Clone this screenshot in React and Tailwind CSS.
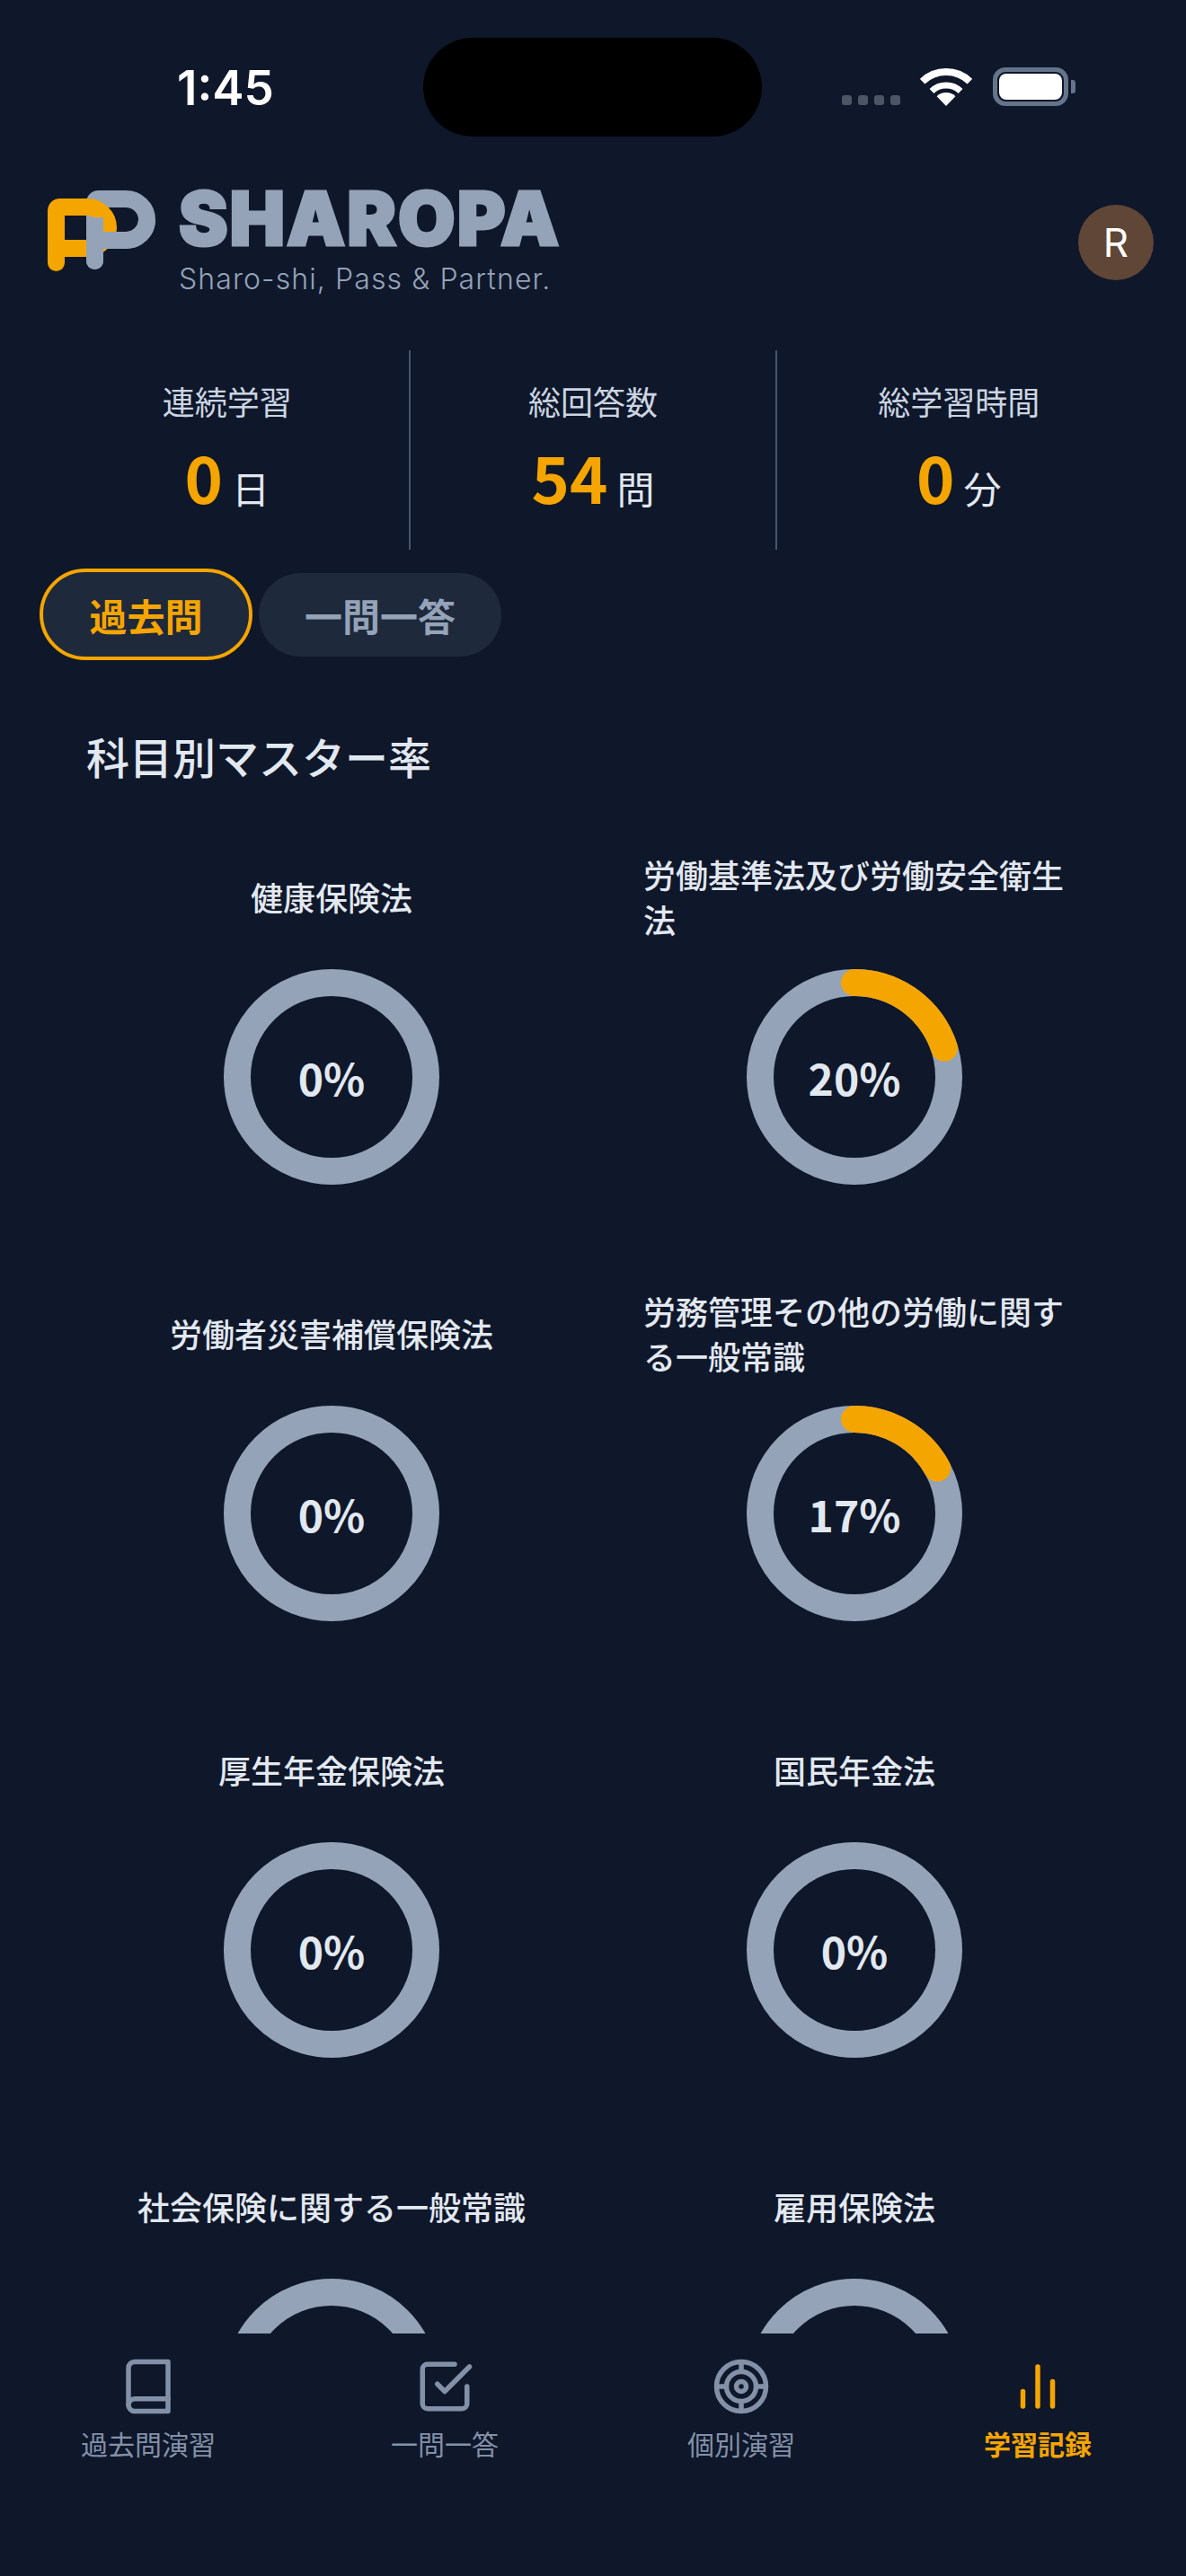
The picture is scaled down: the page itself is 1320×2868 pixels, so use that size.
import React from "react";
import { FiBook, FiCheckSquare, FiBarChart2 } from "react-icons/fi";

const subjects = [
    { name: "健康保険法", rate: 0 },
    { name: "労働基準法及び労働安全衛生法", rate: 20 },
    { name: "労働者災害補償保険法", rate: 0 },
    { name: "労務管理その他の労働に関する一般常識", rate: 17 },
    { name: "厚生年金保険法", rate: 0 },
    { name: "国民年金法", rate: 0 },
    { name: "社会保険に関する一般常識", rate: 0 },
    { name: "雇用保険法", rate: 0 },
];

const stats = [
    { label: "連続学習", value: 0, unit: "日" },
    { label: "総回答数", value: 54, unit: "問" },
    { label: "総学習時間", value: 0, unit: "分" },
];

function TargetIcon() {
    return (
        <svg viewBox="0 0 24 24" className="w-[66px] h-[66px]" fill="none" stroke="currentColor" strokeWidth="2">
            <circle cx="12" cy="12" r="10" />
            <circle cx="12" cy="12" r="6" />
            <circle cx="12" cy="12" r="2" />
            <path d="M12 2v4M12 18v4M2 12h4M18 12h4" />
        </svg>
    );
}

const navItems = [
    { label: "過去問演習", icon: <FiBook size={66} /> },
    { label: "一問一答", icon: <FiCheckSquare size={66} /> },
    { label: "個別演習", icon: <TargetIcon /> },
    { label: "学習記録", icon: <FiBarChart2 size={66} />, active: true },
];

function StatusBar() {
    return (
        <div className="h-[212px] pt-[42px] flex flex-row items-start shrink-0">
            <div className="w-[471px] pl-[197px] pt-[24px] font-['Inter'] font-semibold text-[53px] leading-[64px] text-white">1:45</div>
            <div className="w-[377px] h-[110px] rounded-[55px] bg-black" />
            <div className="pl-[89px] pt-[33px] flex flex-row items-end">
                <div className="flex flex-row gap-[7px] mb-[1px]">
                    <div className="w-[11px] h-[11px] rounded-[3px] bg-[#4b5563]" />
                    <div className="w-[11px] h-[11px] rounded-[3px] bg-[#4b5563]" />
                    <div className="w-[11px] h-[11px] rounded-[3px] bg-[#4b5563]" />
                    <div className="w-[11px] h-[11px] rounded-[3px] bg-[#4b5563]" />
                </div>
                <svg viewBox="0 0 58 42" className="w-[58px] h-[42px] ml-[22px]" fill="none" stroke="#fff">
                    <path d="M2.6 14.7A38 38 0 0 1 55.4 14.7" strokeWidth="8" />
                    <path d="M13 25.5A23 23 0 0 1 45 25.5" strokeWidth="7" />
                    <path d="M29 42L18.6 31.2A15 15 0 0 1 39.4 31.2Z" fill="#fff" stroke="none" />
                </svg>
                <div className="ml-[23px] flex flex-row items-center">
                    <div className="w-[84px] h-[43px] rounded-[14px] border-[5px] border-[#64748b] p-[2px]">
                        <div className="w-full h-full rounded-[8px] bg-white" />
                    </div>
                    <div className="ml-[3px] w-[5px] h-[15px] rounded-r-[3px] bg-[#64748b]" />
                </div>
            </div>
        </div>
    );
}

function LogoMark() {
    return (
        <svg viewBox="0 0 120 90" className="w-[120px] h-[90px] shrink-0" fill="none" strokeWidth="19" strokeLinecap="round">
            <path d="M52.5 78.5V14Q52.5 9.5 57 9.5H87A23.5 23 0 0 1 110.5 32.5A23.5 23 0 0 1 87 55.5H52.5" stroke="#94a3b8" />
            <path d="M9.5 80.5V23Q9.5 18.5 14 18.5H44A23.5 23 0 0 1 67.5 41.5A23.5 23 0 0 1 44 64.5H9.5" stroke="#f5a500" />
            <path d="M52.5 78.5V30" stroke="#94a3b8" strokeLinecap="butt" />
            <path d="M52.5 78.5V72" stroke="#94a3b8" />
            <path d="M110.5 32.5A23.5 23 0 0 1 87 55.5H52.5" stroke="#94a3b8" strokeLinecap="butt" />
        </svg>
    );
}

function Header() {
    return (
        <div className="h-[178px] pl-[53px] pr-[36px] flex flex-row justify-between items-start shrink-0">
            <div className="flex flex-row gap-[26px]">
                <LogoMark />
                <div className="flex flex-col -mt-[10px]">
                    <span className="font-['Inter'] font-black text-[82px] leading-[84px] tracking-[2px] [-webkit-text-stroke:3px_#94a3b8] text-[#94a3b8]">SHAROPA</span>
                    <span className="mt-[5px] font-['Inter'] font-light text-[32px] leading-[40px] tracking-[1.1px] text-[#94a3b8]">Sharo-shi, Pass &amp; Partner.</span>
                </div>
            </div>
            <div className="mt-[16px] w-[84px] h-[84px] rounded-full bg-[#5f4636] flex items-center justify-center font-['Inter'] text-[44px] text-white">R</div>
        </div>
    );
}

function Stats() {
    return (
        <div className="h-[222px] px-[50px] flex flex-row shrink-0">
            {stats.map((s, i) => (
                <div
                    key={s.label}
                    className={
                        i < 2
                            ? "flex-1 flex flex-col items-center justify-center gap-[12px] border-r-2 border-[#475569] pb-[8px]"
                            : "flex-1 flex flex-col items-center justify-center gap-[12px] pb-[8px]"
                    }
                >
                    <p className="text-[36px] leading-[54px] text-[#cbd5e1]">{s.label}</p>
                    <p className="flex flex-row items-baseline gap-[10px]">
                        <span className="text-[72px] leading-[90px] font-bold text-[#f5a500]">{s.value}</span>
                        <span className="text-[42px] leading-[60px] text-[#e2e8f0]">{s.unit}</span>
                    </p>
                </div>
            ))}
        </div>
    );
}

function Tabs() {
    return (
        <div className="mt-[21px] pl-[44px] flex flex-row items-center gap-[7px] shrink-0">
            <div className="w-[237px] h-[102px] rounded-[51px] border-[4px] border-[#f5a500] bg-[#1e293b] flex items-center justify-center text-[42px] font-bold text-[#f5a500]">過去問</div>
            <div className="w-[270px] h-[93px] rounded-[47px] bg-[#1e293b] flex items-center justify-center text-[42px] font-bold text-[#94a3b8]">一問一答</div>
        </div>
    );
}

function Ring({ rate }) {
    const r = 105;
    const c = 2 * Math.PI * r;
    return (
        <div className="relative w-[240px] h-[240px]">
            <svg viewBox="0 0 240 240" className="w-[240px] h-[240px] -rotate-90" fill="none" strokeWidth="30">
                <circle cx="120" cy="120" r={r} stroke="#94a3b8" />
                {rate > 0 && (
                    <circle
                        cx="120"
                        cy="120"
                        r={r}
                        stroke="#f5a500"
                        strokeLinecap="round"
                        strokeDasharray={`${(c * rate) / 100} ${c}`}
                    />
                )}
            </svg>
            <div className="absolute inset-0 flex items-center justify-center text-[48px] font-bold text-[#e2e8f0]">{rate}%</div>
        </div>
    );
}

function SubjectCard({ name, rate }) {
    return (
        <div className="flex flex-col items-center">
            <div className="h-[101px] flex items-center">
                <p className="max-w-[470px] text-[36px] leading-[50px] font-medium text-[#e2e8f0]">{name}</p>
            </div>
            <div className="mt-[31px]">
                <Ring rate={rate} />
            </div>
        </div>
    );
}

function BottomNav() {
    return (
        <div className="h-[270px] pt-[26px] flex flex-row shrink-0 bg-[#0f172a]">
            {navItems.map((item) => (
                <div
                    key={item.label}
                    className={
                        item.active
                            ? "flex-1 flex flex-col items-center gap-[10px] text-[#f5a500] font-bold"
                            : "flex-1 flex flex-col items-center gap-[10px] text-[#8291a8]"
                    }
                >
                    {item.icon}
                    <span className="text-[30px] leading-[40px]">{item.label}</span>
                </div>
            ))}
        </div>
    );
}

export default function App() {
    return (
        <div className="w-[1320px] h-[2868px] overflow-hidden bg-[#0f172a] flex flex-col font-['Noto_Sans_CJK_JP',sans-serif]">
            <StatusBar />
            <Header />
            <Stats />
            <Tabs />
            <div className="flex-1 min-h-0 overflow-hidden">
                <h2 className="pl-[96px] mt-[76px] text-[48px] leading-[60px] font-medium text-[#e2e8f0]">科目別マスター率</h2>
                <div className="mt-[76px] px-[78px] grid grid-cols-2 gap-x-[0px] gap-y-[114px]">
                    {subjects.map((s) => (
                        <SubjectCard key={s.name} name={s.name} rate={s.rate} />
                    ))}
                </div>
            </div>
            <BottomNav />
        </div>
    );
}
